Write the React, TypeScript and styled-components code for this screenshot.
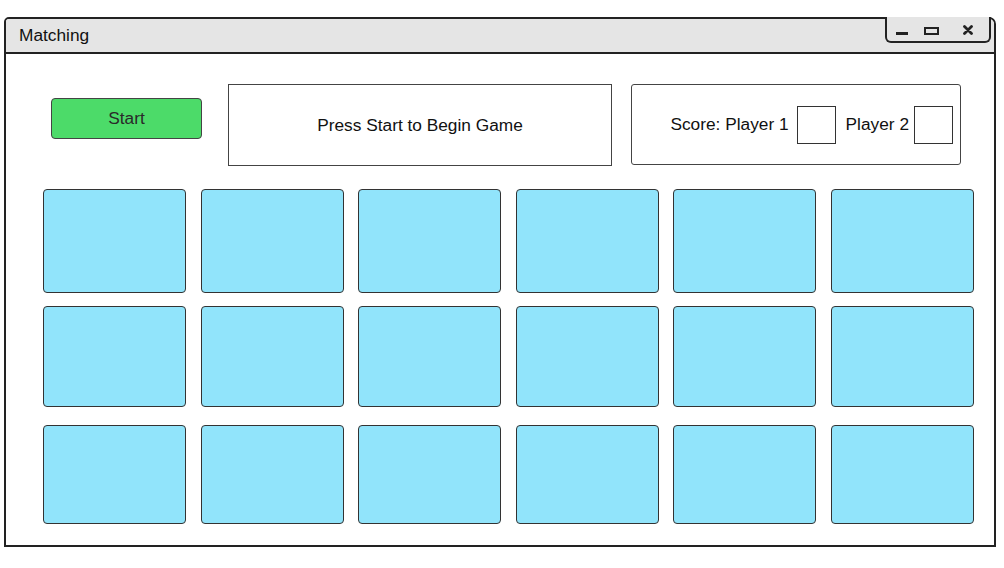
import styled, { createGlobalStyle } from "styled-components";

const GlobalStyle = createGlobalStyle`
  html, body {
    margin: 0;
    padding: 0;
    background: #ffffff;
  }
  body {
    font-family: "Liberation Sans", Arial, sans-serif;
  }
`

const Window = styled.div`
  box-sizing: border-box;
  margin: 17px 0 0 4px;
  width: 992px;
  height: 530px;
  border: 2px solid #222;
  border-radius: 5px 7px 0 0;
  background: #fff;
  display: flex;
  flex-direction: column;
`

const TitleBar = styled.div`
  display: flex;
  align-items: center;
  justify-content: space-between;
  height: 33px;
  flex-shrink: 0;
  background: #e5e5e5;
  border-bottom: 2px solid #222;
  border-radius: 3px 5px 0 0;
  padding-left: 13px;
`

const Title = styled.span`
  font-size: 17.3px;
  color: #111;
`

const Controls = styled.div`
  box-sizing: border-box;
  align-self: flex-start;
  display: flex;
  align-items: flex-start;
  width: 106px;
  height: 26px;
  margin-top: -2px;
  margin-right: 3px;
  padding-left: 9px;
  border: 2px solid #222;
  border-top: none;
  border-radius: 0 0 6px 6px;
  background: #e5e5e5;
`

const ControlIcon = styled.svg<{ $top: number; $gap: number }>`
  display: block;
  margin-top: ${p => p.$top}px;
  margin-left: ${p => p.$gap}px;
`

const Content = styled.div`
  display: flex;
  flex-direction: column;
  padding: 30px 20px 0 37px;
`

const TopRow = styled.div`
  display: flex;
  align-items: flex-start;
  height: 82px;
`

const StartButton = styled.button`
  box-sizing: border-box;
  margin: 14px 0 0 8px;
  width: 151px;
  height: 41px;
  background: #4cdb69;
  border: 1px solid #444;
  border-radius: 4px;
  font-family: "Liberation Sans", Arial, sans-serif;
  font-size: 17.3px;
  color: #2a2a2a;
  padding: 0;
`

const MessageBox = styled.div`
  box-sizing: border-box;
  margin-left: 26px;
  width: 384px;
  height: 82px;
  border: 1px solid #444;
  display: flex;
  align-items: center;
  justify-content: center;
  font-size: 17.3px;
  color: #111;
`

const ScoreBox = styled.div`
  box-sizing: border-box;
  margin-left: 19px;
  width: 330px;
  height: 81px;
  border: 1px solid #444;
  border-radius: 3px;
  display: flex;
  align-items: center;
  justify-content: flex-end;
  padding-right: 7px;
  font-size: 17.3px;
  color: #111;
`

const ScoreLabel = styled.span<{ $gap: number }>`
  margin-left: ${p => p.$gap}px;
`

const ScoreSlot = styled.div<{ $gap: number }>`
  box-sizing: border-box;
  width: 39px;
  height: 38px;
  margin-left: ${p => p.$gap}px;
  border: 1px solid #333;
  background: #fff;
`

const Board = styled.div`
  display: flex;
  flex-direction: column;
  margin-top: 23px;
`

const CardRow = styled.div<{ $height: number; $top: number }>`
  display: grid;
  grid-template-columns: repeat(6, 1fr);
  column-gap: 14.6px;
  height: ${p => p.$height}px;
  margin-top: ${p => p.$top}px;
`

const Card = styled.div`
  box-sizing: border-box;
  background: #91e4fb;
  border: 1px solid #333;
  border-radius: 4px;
`

const rows = [
  { height: 104, top: 0 },
  { height: 101, top: 13 },
  { height: 99, top: 18 },
]

const App = () => {
  return (
    <>
      <GlobalStyle />
      <Window>
        <TitleBar>
          <Title>Matching</Title>
          <Controls>
            <ControlIcon width="12" height="3" viewBox="0 0 12 3" $top={15} $gap={0}>
              <rect x="0" y="0" width="12" height="3" fill="#222" />
            </ControlIcon>
            <ControlIcon width="15" height="8" viewBox="0 0 15 8" $top={10} $gap={16}>
              <rect x="1" y="1" width="13" height="6" fill="none" stroke="#222" strokeWidth="2" />
            </ControlIcon>
            <ControlIcon width="10" height="10" viewBox="0 0 10 10" $top={8} $gap={24}>
              <path d="M1.5 1.5 L8.5 8.5 M8.5 1.5 L1.5 8.5" stroke="#222" strokeWidth="2.8" strokeLinecap="round" />
            </ControlIcon>
          </Controls>
        </TitleBar>
        <Content>
          <TopRow>
            <StartButton>Start</StartButton>
            <MessageBox>Press Start to Begin Game</MessageBox>
            <ScoreBox>
              <ScoreLabel $gap={0}>Score: Player 1</ScoreLabel>
              <ScoreSlot $gap={8} />
              <ScoreLabel $gap={10}>Player 2</ScoreLabel>
              <ScoreSlot $gap={5} />
            </ScoreBox>
          </TopRow>
          <Board>
            {rows.map((r, i) => (
              <CardRow key={i} $height={r.height} $top={r.top}>
                {Array.from({ length: 6 }).map((_, j) => (
                  <Card key={j} />
                ))}
              </CardRow>
            ))}
          </Board>
        </Content>
      </Window>
    </>
  )
}

export default App;
